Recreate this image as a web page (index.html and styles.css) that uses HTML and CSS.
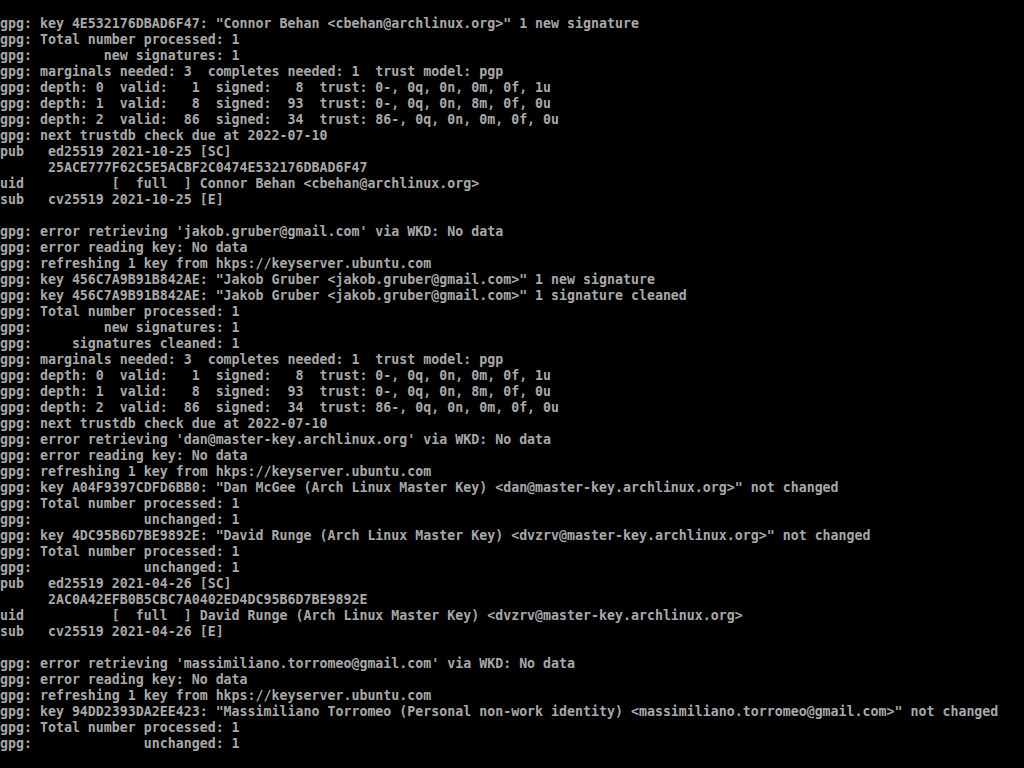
FILE: index.html
```html
<!DOCTYPE html>
<html>
<head>
<meta charset="utf-8">
<link rel="stylesheet" href="styles.css">
</head>
<body>
<pre class="console">
gpg: key 4E532176DBAD6F47: "Connor Behan &lt;cbehan@archlinux.org&gt;" 1 new signature
gpg: Total number processed: 1
gpg:         new signatures: 1
gpg: marginals needed: 3  completes needed: 1  trust model: pgp
gpg: depth: 0  valid:   1  signed:   8  trust: 0-, 0q, 0n, 0m, 0f, 1u
gpg: depth: 1  valid:   8  signed:  93  trust: 0-, 0q, 0n, 8m, 0f, 0u
gpg: depth: 2  valid:  86  signed:  34  trust: 86-, 0q, 0n, 0m, 0f, 0u
gpg: next trustdb check due at 2022-07-10
pub   ed25519 2021-10-25 [SC]
      25ACE777F62C5E5ACBF2C0474E532176DBAD6F47
uid           [  full  ] Connor Behan &lt;cbehan@archlinux.org&gt;
sub   cv25519 2021-10-25 [E]

gpg: error retrieving 'jakob.gruber@gmail.com' via WKD: No data
gpg: error reading key: No data
gpg: refreshing 1 key from hkps://keyserver.ubuntu.com
gpg: key 456C7A9B91B842AE: "Jakob Gruber &lt;jakob.gruber@gmail.com&gt;" 1 new signature
gpg: key 456C7A9B91B842AE: "Jakob Gruber &lt;jakob.gruber@gmail.com&gt;" 1 signature cleaned
gpg: Total number processed: 1
gpg:         new signatures: 1
gpg:     signatures cleaned: 1
gpg: marginals needed: 3  completes needed: 1  trust model: pgp
gpg: depth: 0  valid:   1  signed:   8  trust: 0-, 0q, 0n, 0m, 0f, 1u
gpg: depth: 1  valid:   8  signed:  93  trust: 0-, 0q, 0n, 8m, 0f, 0u
gpg: depth: 2  valid:  86  signed:  34  trust: 86-, 0q, 0n, 0m, 0f, 0u
gpg: next trustdb check due at 2022-07-10
gpg: error retrieving 'dan@master-key.archlinux.org' via WKD: No data
gpg: error reading key: No data
gpg: refreshing 1 key from hkps://keyserver.ubuntu.com
gpg: key A04F9397CDFD6BB0: "Dan McGee (Arch Linux Master Key) &lt;dan@master-key.archlinux.org&gt;" not changed
gpg: Total number processed: 1
gpg:              unchanged: 1
gpg: key 4DC95B6D7BE9892E: "David Runge (Arch Linux Master Key) &lt;dvzrv@master-key.archlinux.org&gt;" not changed
gpg: Total number processed: 1
gpg:              unchanged: 1
pub   ed25519 2021-04-26 [SC]
      2AC0A42EFB0B5CBC7A0402ED4DC95B6D7BE9892E
uid           [  full  ] David Runge (Arch Linux Master Key) &lt;dvzrv@master-key.archlinux.org&gt;
sub   cv25519 2021-04-26 [E]

gpg: error retrieving 'massimiliano.torromeo@gmail.com' via WKD: No data
gpg: error reading key: No data
gpg: refreshing 1 key from hkps://keyserver.ubuntu.com
gpg: key 94DD2393DA2EE423: "Massimiliano Torromeo (Personal non-work identity) &lt;massimiliano.torromeo@gmail.com&gt;" not changed
gpg: Total number processed: 1
gpg:              unchanged: 1
</pre>
</body>
</html>
```
FILE: styles.css
```css
html, body {
  margin: 0;
  padding: 0;
  background: #000;
  width: 1024px;
  height: 768px;
  overflow: hidden;
}
.console {
  margin: 0;
  padding: 16px 0 0 0;
  color: #a8a8a8;
  font-family: "DejaVu Sans Mono", monospace;
  font-size: 13.288px;
  font-weight: bold;
  line-height: 16px;
  white-space: pre;
}
```
